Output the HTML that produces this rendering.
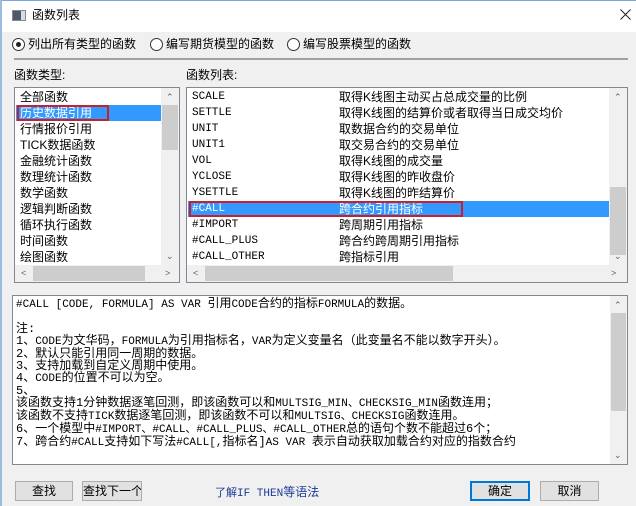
<!DOCTYPE html>
<html><head><meta charset="utf-8"><style>
*{margin:0;padding:0;box-sizing:border-box}
body{width:636px;height:506px;overflow:hidden;background:#f0f0f0;font-family:"Liberation Sans","Noto Sans CJK SC",sans-serif;font-size:12px;color:#000;position:relative}
.abs{position:absolute}
.t{position:absolute;white-space:nowrap;line-height:16px}
.mono{font-family:"Liberation Mono","Noto Sans CJK SC",monospace;font-size:11px}
.box{position:absolute;background:#fff;border:1px solid #828790}
.sb{position:absolute;background:#f0f0f0}
.thumb{position:absolute;background:#cdcdcd}
.btn{position:absolute;height:20px;background:#e1e1e1;border:1px solid #adadad;text-align:center;line-height:18px;font-size:12px;white-space:nowrap;overflow:hidden}
.radio{position:absolute;width:13px;height:13px;border:1px solid #333;border-radius:50%;background:#fff}
.arr{position:absolute;font-size:9px;color:#606060;line-height:10px}
.m{font-size:11px}
</style></head><body>
<div class="abs" style="left:0;top:0;width:636px;height:32px;background:#fff;border-top:1px solid #7aa7d8"></div>
<div class="abs" style="left:0;top:0;width:2px;height:506px;background:#9bbbe0"></div>
<div class="abs" style="left:12px;top:10px;width:14px;height:11px;background:#4a5a6a;border:1px solid #888"></div>
<div class="abs" style="left:21px;top:11px;width:4px;height:9px;background:#d8dde2"></div>
<div class="t" style="left:32px;top:7px;font-size:12px">函数列表</div>
<svg class="abs" style="left:620px;top:9px" width="11" height="11"><path d="M0.5 0.5L10.5 10.5M10.5 0.5L0.5 10.5" stroke="#222" stroke-width="1"/></svg>

<div class="radio" style="left:12px;top:38px"><div class="abs" style="left:3px;top:3px;width:5px;height:5px;border-radius:50%;background:#222"></div></div>
<div class="t" style="left:28px;top:36px">列出所有类型的函数</div>
<div class="radio" style="left:150px;top:38px"></div>
<div class="t" style="left:166px;top:36px">编写期货模型的函数</div>
<div class="radio" style="left:287px;top:38px"></div>
<div class="t" style="left:303px;top:36px">编写股票模型的函数</div>
<div class="abs" style="left:14px;top:58px;width:614px;height:2px;background:#a0a0a0"></div>

<div class="t" style="left:14px;top:67px">函数类型:</div>
<div class="t" style="left:186px;top:67px">函数列表:</div>

<div class="box" style="left:14px;top:87px;width:166px;height:196px;overflow:hidden">
 <div class="abs" style="left:1px;top:17px;width:145px;height:16px;background:#3399ff"></div>
 <div class="abs" style="left:2px;top:17px;width:92px;height:16px;border:2px solid #c8202a"></div>
 <div class="t" style="left:5px;top:1px">全部函数</div>
 <div class="t" style="left:5px;top:17px;color:#fff">历史数据引用</div>
 <div class="t" style="left:5px;top:33px">行情报价引用</div>
 <div class="t" style="left:5px;top:49px">TICK数据函数</div>
 <div class="t" style="left:5px;top:65px">金融统计函数</div>
 <div class="t" style="left:5px;top:81px">数理统计函数</div>
 <div class="t" style="left:5px;top:97px">数学函数</div>
 <div class="t" style="left:5px;top:113px">逻辑判断函数</div>
 <div class="t" style="left:5px;top:129px">循环执行函数</div>
 <div class="t" style="left:5px;top:145px">时间函数</div>
 <div class="t" style="left:5px;top:161px">绘图函数</div>
 <div class="t" style="left:5px;top:177px">文字函数</div>
 <div class="sb" style="left:146px;top:0;width:18px;height:178px"><div class="thumb" style="left:1px;top:17px;width:16px;height:45px"></div><div class="arr" style="left:5px;top:4px">⌃</div><div class="arr" style="left:5px;top:163px">⌄</div></div>
 <div class="sb" style="left:0;top:177px;width:164px;height:17px"><div class="thumb" style="left:18px;top:1px;width:112px;height:15px"></div><div class="arr" style="left:6px;top:3px">&lt;</div><div class="arr" style="left:150px;top:3px">&gt;</div></div>
</div>

<div class="box" style="left:186px;top:87px;width:442px;height:196px;overflow:hidden">
 <div class="abs" style="left:1px;top:113px;width:422px;height:16px;background:#3399ff"></div>
 <div class="abs" style="left:2px;top:113px;width:274px;height:16px;border:2px solid #c8202a"></div>
 <div class="t mono" style="left:5px;top:1px">SCALE</div><div class="t" style="left:152px;top:1px">取得K线图主动买占总成交量的比例</div>
 <div class="t mono" style="left:5px;top:17px">SETTLE</div><div class="t" style="left:152px;top:17px">取得K线图的结算价或者取得当日成交均价</div>
 <div class="t mono" style="left:5px;top:33px">UNIT</div><div class="t" style="left:152px;top:33px">取数据合约的交易单位</div>
 <div class="t mono" style="left:5px;top:49px">UNIT1</div><div class="t" style="left:152px;top:49px">取交易合约的交易单位</div>
 <div class="t mono" style="left:5px;top:65px">VOL</div><div class="t" style="left:152px;top:65px">取得K线图的成交量</div>
 <div class="t mono" style="left:5px;top:81px">YCLOSE</div><div class="t" style="left:152px;top:81px">取得K线图的昨收盘价</div>
 <div class="t mono" style="left:5px;top:97px">YSETTLE</div><div class="t" style="left:152px;top:97px">取得K线图的昨结算价</div>
 <div class="t mono" style="left:5px;top:113px;color:#fff">#CALL</div><div class="t" style="left:152px;top:113px;color:#fff">跨合约引用指标</div>
 <div class="t mono" style="left:5px;top:129px">#IMPORT</div><div class="t" style="left:152px;top:129px">跨周期引用指标</div>
 <div class="t mono" style="left:5px;top:145px">#CALL_PLUS</div><div class="t" style="left:152px;top:145px">跨合约跨周期引用指标</div>
 <div class="t mono" style="left:5px;top:161px">#CALL_OTHER</div><div class="t" style="left:152px;top:161px">跨指标引用</div>
 <div class="sb" style="left:422px;top:0;width:18px;height:178px"><div class="thumb" style="left:1px;top:99px;width:16px;height:68px"></div><div class="arr" style="left:5px;top:4px">⌃</div><div class="arr" style="left:5px;top:163px">⌄</div></div>
 <div class="sb" style="left:0;top:177px;width:440px;height:17px"><div class="thumb" style="left:18px;top:1px;width:248px;height:15px"></div><div class="arr" style="left:6px;top:3px">&lt;</div><div class="arr" style="left:424px;top:3px">&gt;</div></div>
</div>

<div class="box" style="left:12px;top:295px;width:616px;height:170px;overflow:hidden">
 <div class="abs" style="left:3px;top:2px;font-size:12px;line-height:12px;white-space:pre;font-family:'Liberation Mono','Noto Sans CJK SC',monospace"><span class="m">#CALL [CODE, FORMULA] AS VAR </span>引用<span class="m">CODE</span>合约的指标<span class="m">FORMULA</span>的数据。

注:
1、<span class="m">CODE</span>为文华码，<span class="m">FORMULA</span>为引用指标名，<span class="m">VAR</span>为定义变量名（此变量名不能以数字开头）。
2、默认只能引用同一周期的数据。
3、支持加载到自定义周期中使用。
4、<span class="m">CODE</span>的位置不可以为空。
5、
该函数支持1分钟数据逐笔回测，即该函数可以和<span class="m">MULTSIG_MIN、CHECKSIG_MIN</span>函数连用；
该函数不支持<span class="m">TICK</span>数据逐笔回测，即该函数不可以和<span class="m">MULTSIG、CHECKSIG</span>函数连用。
6、一个模型中<span class="m">#IMPORT、#CALL、#CALL_PLUS、#CALL_OTHER</span>总的语句个数不能超过6个；
7、跨合约<span class="m">#CALL</span>支持如下写法<span class="m">#CALL[,</span>指标名]<span class="m">AS VAR </span>表示自动获取加载合约对应的指数合约</div>
 <div class="sb" style="left:597px;top:0;width:17px;height:168px"><div class="thumb" style="left:1px;top:17px;width:15px;height:98px"></div><div class="arr" style="left:4px;top:4px">⌃</div><div class="arr" style="left:4px;top:154px">⌄</div></div>
</div>

<div class="btn" style="left:15px;top:481px;width:58px">查找</div>
<div class="btn" style="left:82px;top:481px;width:60px">查找下一个</div>
<div class="t" style="left:215px;top:484px;color:#1a3a9a"><span class="mono">了解IF THEN</span>等语法</div>
<div class="btn" style="left:470px;top:481px;width:60px;border:2px solid #0078d7;line-height:16px">确定</div>
<div class="btn" style="left:540px;top:481px;width:59px">取消</div>
</body></html>
